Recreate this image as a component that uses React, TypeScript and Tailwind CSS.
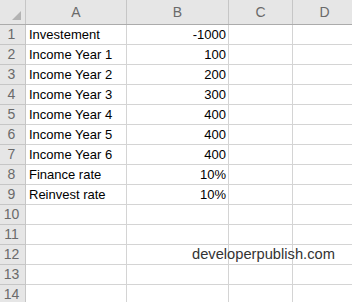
const cols = ["A", "B", "C", "D"];

const rows: [string, string][] = [
  ["Investement", "-1000"],
  ["Income Year 1", "100"],
  ["Income Year 2", "200"],
  ["Income Year 3", "300"],
  ["Income Year 4", "400"],
  ["Income Year 5", "400"],
  ["Income Year 6", "400"],
  ["Finance rate", "10%"],
  ["Reinvest rate", "10%"],
  ["", ""],
  ["", ""],
  ["", ""],
  ["", ""],
  ["", ""],
];

const colWidths = ["w-[101px]", "w-[102px]", "w-[64px]", "w-[64px]"];

export default function App() {
  return (
    <div className="relative w-[352px] h-[302px] overflow-hidden bg-white font-['Liberation_Sans',Arial,sans-serif] text-[13px] text-black">
      {/* column headers */}
      <div className="flex h-[25px] bg-[#e6e6e6] border-b border-[#ababab]">
        <div className="relative w-[26px] shrink-0 border-r border-[#c6c6c6]">
          <div className="absolute right-[4px] bottom-[4px] w-0 h-0 border-l-[9px] border-l-transparent border-b-[9px] border-b-[#b3b3b3]" />
        </div>
        {cols.map((c, i) => (
          <div
            key={c}
            className={`${colWidths[i]} shrink-0 border-r border-[#c6c6c6] flex items-center justify-center text-[#6a6a6a] text-[14px]`}
          >
            {c}
          </div>
        ))}
      </div>

      {rows.map(([a, b], i) => (
        <div key={i} className="flex h-[20px]">
          <div className="w-[26px] shrink-0 bg-[#e6e6e6] border-r border-b border-[#c6c6c6] flex items-center justify-center pr-[2px] text-[#6a6a6a] text-[14px]">
            {i + 1}
          </div>
          <div className="w-[101px] shrink-0 border-r border-b border-[#d4d4d4] flex items-center pl-[3px] whitespace-nowrap">
            {a}
          </div>
          <div className="w-[102px] shrink-0 border-r border-b border-[#d4d4d4] flex items-center justify-end pr-[2px]">
            {b}
          </div>
          <div className="w-[64px] shrink-0 border-r border-b border-[#d4d4d4]" />
          <div className="w-[64px] shrink-0 border-r border-b border-[#d4d4d4]" />
        </div>
      ))}

      <div className="absolute left-[192px] top-[245px] h-[19px] flex items-center text-[14.7px] text-[#333333]">
        developerpublish.com
      </div>
    </div>
  );
}
